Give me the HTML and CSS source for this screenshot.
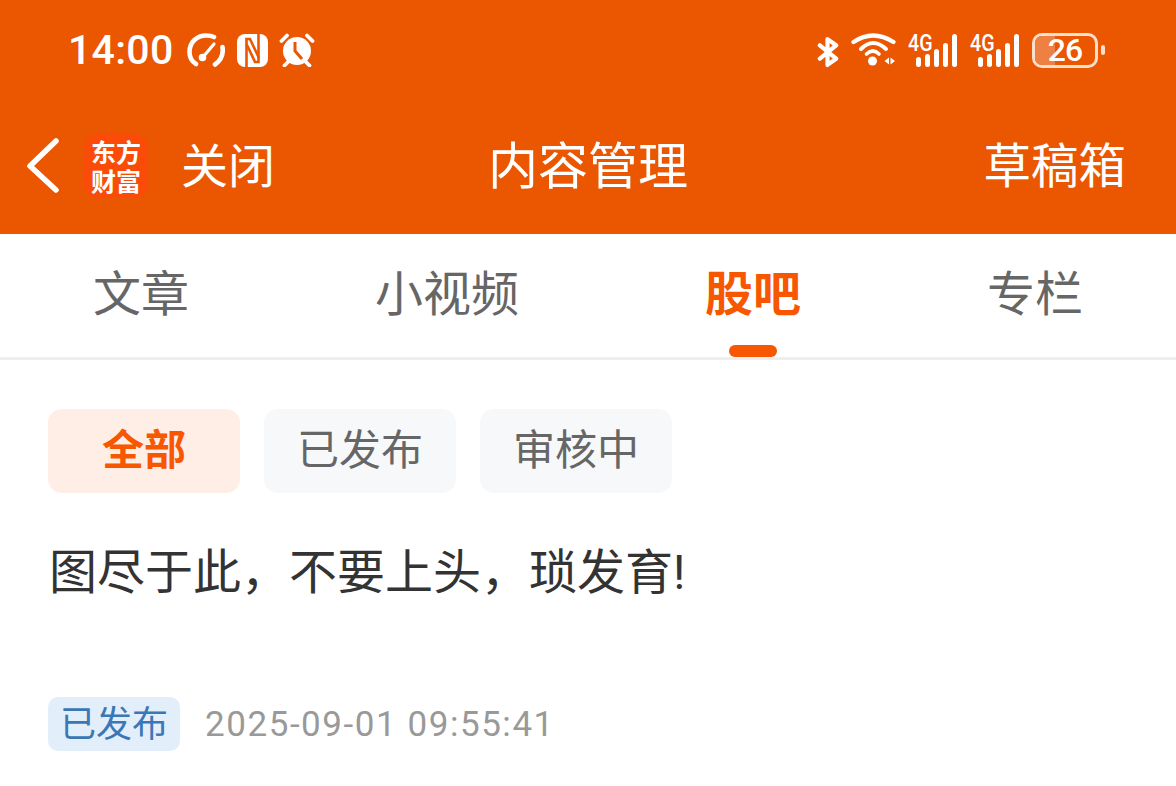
FILE: index.html
```html
<!DOCTYPE html>
<html lang="zh-CN">
<head>
    <meta charset="UTF-8">
    <meta name="viewport" content="width=device-width, initial-scale=1.0">
    <title>内容管理</title>
    <link rel="stylesheet" href="styles.css">
</head>
<body>
    <header class="top">
        <div class="status-bar">
            <span class="clock">14:00</span>
            <svg class="ic-gauge" width="38" height="34" viewBox="0 0 38 34" fill="none" stroke="#fff" stroke-width="4.600" stroke-linecap="round">
                <path d="M9 31 C4 28 2.500 23 2.500 19 C2.500 9 10 2.500 19 2.500 C22 2.500 25 3 27 4"/>
                <path d="M35.500 14 C36.500 21 34.500 27 28 31.500"/>
                <path d="M16 24 L27 11" stroke-width="3.200"/>
                <circle cx="15.500" cy="24.500" r="3.800" fill="#fff" stroke="none"/>
            </svg>
            <svg class="ic-nfc" width="31" height="33" viewBox="0 0 31 33" fill="none">
                <rect x="0" y="0" width="31" height="33" rx="8" fill="#fff"/>
                <path d="M9.500 33 V5 H13 L22 24" stroke="#eb5600" stroke-width="2.600"/>
                <path d="M21.500 0 V28 H18 L9.500 10" stroke="#eb5600" stroke-width="2.600"/>
            </svg>
            <svg class="ic-alarm" width="36" height="34" viewBox="0 0 36 34" fill="none">
                <circle cx="18" cy="18" r="14" fill="#fff"/>
                <path d="M2.500 8 L8 2.500 M28 2.500 L33.500 8 M9 29 L5.500 32.500 M27 29 L30.500 32.500" stroke="#fff" stroke-width="3.800" stroke-linecap="round"/>
                <path d="M16 9 V18 L23 26" stroke="#eb5600" stroke-width="3"/>
            </svg>
            <div class="status-right">
                <svg class="ic-bt" width="22" height="32" viewBox="0 0 23 32" fill="none" stroke="#fff" stroke-width="4.400" stroke-linecap="round" stroke-linejoin="round">
                    <path d="M3 9 L20 23 L11 29.500 V2.500 L20 9 L3 23"/>
                </svg>
                <svg class="ic-wifi" width="45" height="34" viewBox="0 0 45 34" fill="none" stroke="#fff" stroke-linecap="round">
                    <path d="M2.500 9 Q22 -4 42.500 9" stroke-width="4.200"/>
                    <path d="M10 16 Q22 4 35 16" stroke-width="4"/>
                    <path d="M15.500 21 Q22 15 28 21" stroke-width="3.600"/>
                    <circle cx="21.500" cy="28" r="4.500" fill="#fff" stroke="none"/>
                    <path d="M38 24.500 L33.500 28 L38 31.500 Z M39.500 24.500 L44 28 L39.500 31.500 Z" fill="#fff" stroke="none"/>
                </svg>
                <div class="signal">
                    <span class="signal-label">4G</span>
                    <svg width="50" height="33" viewBox="0 0 50 33" fill="#fff">
                        <rect x="8" y="23" width="5" height="10" rx="2.500"/>
                        <rect x="17" y="20" width="5" height="13" rx="2.500"/>
                        <rect x="26" y="15" width="5" height="18" rx="2.500"/>
                        <rect x="35" y="9" width="5" height="24" rx="2.500"/>
                        <rect x="44" y="0" width="5" height="33" rx="2.500"/>
                    </svg>
                </div>
                <div class="signal">
                    <span class="signal-label">4G</span>
                    <svg width="50" height="33" viewBox="0 0 50 33" fill="#fff">
                        <rect x="8" y="23" width="5" height="10" rx="2.500"/>
                        <rect x="17" y="20" width="5" height="13" rx="2.500"/>
                        <rect x="26" y="15" width="5" height="18" rx="2.500"/>
                        <rect x="35" y="9" width="5" height="24" rx="2.500"/>
                        <rect x="44" y="0" width="5" height="33" rx="2.500"/>
                    </svg>
                </div>
                <div class="battery">
                    <div class="battery-body">
                        <div class="battery-fill"></div>
                        <span class="battery-num">26</span>
                    </div>
                    <div class="battery-cap"></div>
                </div>
            </div>
        </div>
        <nav class="nav-bar">
            <svg class="back" width="34" height="56" viewBox="0 0 34 56" fill="none" stroke="#fff" stroke-width="5.500" stroke-linecap="round" stroke-linejoin="round">
                <path d="M30 3 L4 28 L30 52"/>
            </svg>
            <div class="logo">东方<br>财富</div>
            <span class="close">关闭</span>
            <h1 class="title">内容管理</h1>
            <span class="drafts">草稿箱</span>
        </nav>
    </header>

    <ul class="tabs">
        <li class="tab">文章</li>
        <li class="tab">小视频</li>
        <li class="tab active">股吧</li>
        <li class="tab">专栏</li>
    </ul>

    <div class="filters">
        <button class="chip chip-on">全部</button>
        <button class="chip">已发布</button>
        <button class="chip">审核中</button>
    </div>

    <article class="post">
        <p class="post-text">图尽于此，不要上头，琐发育!</p>
        <div class="post-meta">
            <span class="tag">已发布</span>
            <span class="date">2025-09-01 09:55:41</span>
        </div>
    </article>
</body>
</html>
```

FILE: styles.css
```css
* {
    margin: 0;
    padding: 0;
    box-sizing: border-box;
    font-family: Roboto, "Noto Sans CJK SC", sans-serif;
}

body {
    background-color: #fff;
    color: #333;
    width: 1176px;
    height: 786px;
    overflow: hidden;
}

.top {
    background-color: #eb5600;
    color: #fff;
    height: 234px;
}

.status-bar {
    display: flex;
    align-items: center;
    height: 100px;
    padding: 0 71px 0 68px;
}

.clock {
    flex: none;
    width: 119px;
    font-size: 41px;
    line-height: 1;
    font-weight: 500;
    letter-spacing: 0.3px;
}

.ic-gauge {
    margin-right: 12px;
}

.ic-nfc {
    margin-right: 11px;
}

.status-right {
    display: flex;
    align-items: center;
    margin-left: auto;
    gap: 12px;
}

.ic-bt {
    margin-top: 4px;
}

.signal {
    position: relative;
    width: 50px;
    height: 33px;
}

.signal-label {
    position: absolute;
    left: 0;
    top: -3px;
    font-size: 24px;
    line-height: 24px;
    font-weight: 500;
    transform: scaleX(0.82);
    transform-origin: left center;
}

.battery {
    display: flex;
    align-items: center;
    gap: 3px;
}

.battery-body {
    position: relative;
    display: flex;
    align-items: center;
    justify-content: center;
    width: 66px;
    height: 35px;
    border: 3px solid #fadfcd;
    border-radius: 10px;
    overflow: hidden;
}

.battery-fill {
    position: absolute;
    left: 0;
    top: 0;
    bottom: 0;
    width: 20px;
    background-color: #ef8044;
}

.battery-num {
    position: relative;
    font-size: 32px;
    line-height: 1;
    font-weight: 500;
    letter-spacing: -1px;
}

.battery-cap {
    width: 4px;
    height: 10px;
    border-radius: 2px;
    background-color: #fadfcd;
}

.nav-bar {
    position: relative;
    display: flex;
    align-items: center;
    height: 134px;
    padding: 0 50px 2px 26px;
}

.back {
    margin-right: 24px;
}

.logo {
    width: 64px;
    height: 64px;
    margin-right: 33px;
    padding-top: 3px;
    border-radius: 14px;
    background-color: #fa4c08;
    font-size: 25px;
    line-height: 29px;
    font-weight: 700;
    text-align: center;
    font-family: "Noto Sans CJK SC", sans-serif;
}

.close {
    font-size: 47px;
    padding-bottom: 8px;
}

.title {
    position: absolute;
    left: 488px;
    top: 50%;
    transform: translateY(-50%);
    margin-top: -5px;
    font-size: 50px;
    font-weight: 400;
    white-space: nowrap;
}

.drafts {
    margin-left: auto;
    font-size: 47.500px;
    padding-bottom: 8px;
}

.tabs {
    display: flex;
    justify-content: space-around;
    height: 126px;
    list-style: none;
    border-bottom: 3px solid #eeeeee;
}

.tab {
    position: relative;
    font-size: 48px;
    line-height: 122px;
    color: #666;
}

.tab.active {
    color: #f75700;
    font-weight: 700;
}

.tab.active::after {
    content: "";
    position: absolute;
    left: 50%;
    bottom: 0;
    width: 48px;
    height: 12px;
    margin-left: -24px;
    border-radius: 6px;
    background-color: #f75700;
}

.filters {
    display: flex;
    gap: 24px;
    padding: 49px 48px 0;
}

.chip {
    width: 192px;
    height: 84px;
    padding-bottom: 10px;
    border: none;
    border-radius: 14px;
    background-color: #f7f8fa;
    color: #666;
    font-size: 42px;
}

.chip-on {
    background-color: #ffeee6;
    color: #f75700;
    font-weight: 700;
}

.post {
    padding: 0 48px;
}

.post-text {
    margin-top: 45px;
    padding-left: 1px;
    font-size: 48px;
    line-height: 70px;
    color: #333;
}

.post-meta {
    display: flex;
    align-items: center;
    gap: 25px;
    margin-top: 89px;
}

.tag {
    display: flex;
    align-items: center;
    justify-content: center;
    width: 132px;
    height: 54px;
    padding-bottom: 6px;
    border-radius: 10px;
    background-color: #e2eefa;
    color: #3b77b6;
    font-size: 36px;
}

.date {
    font-size: 35px;
    letter-spacing: 1.55px;
    color: #999;
}
```
